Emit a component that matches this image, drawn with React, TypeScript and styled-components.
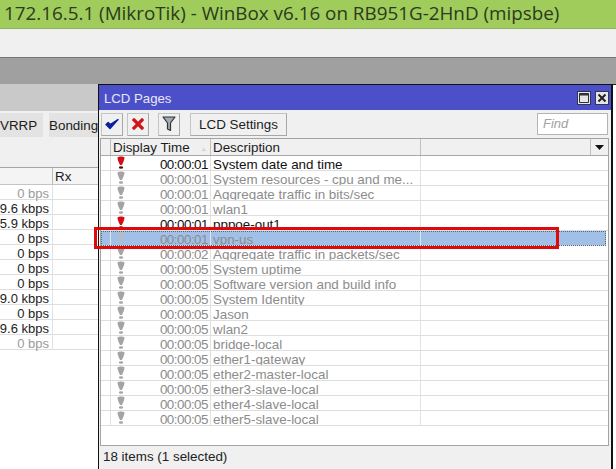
import React from "react";
import styled, { createGlobalStyle } from "styled-components";

const Global = createGlobalStyle`
  html, body { margin: 0; padding: 0; background: #a0a0a0; }
  body { width: 616px; height: 469px; overflow: hidden; font-family: "Liberation Sans", Arial, sans-serif; }
  #root { height: 469px; }
`;

const Page = styled.div`
  width: 616px; height: 469px; display: flex; flex-direction: column; overflow: hidden; position: relative;
`;
const TitleBar = styled.div`
  height: 28px; flex: none; background: #a0cc5c; border-bottom: 1px solid #8fae66; color: #2b3a20;
  font: 18.83px/27px "Open Sans", "Noto Sans", sans-serif; padding-left: 4px; white-space: nowrap;
`;
const MenuBar = styled.div`
  height: 28px; flex: none; background: #f0f0f0; border-bottom: 1px solid #757575;
`;
const Desktop = styled.div`
  flex: 1; min-height: 0; display: flex; align-items: stretch; padding-top: 26px; background: #a0a0a0; position: relative;
`;
const BackWindow = styled.div`
  width: 98px; flex: none; background: #fff; display: flex; flex-direction: column; overflow: hidden;
`;
const BackTitle = styled.div` height: 27px; flex: none; background: #c9c9c9; `;
const BackTabs = styled.div`
  height: 56px; flex: none; background: #f0f0f0; display: flex; align-items: flex-start; gap: 6px; padding-top: 2px; box-sizing: border-box;
`;
const BackTab = styled.div<{ $w: number }>`
  width: ${p => p.$w}px; height: 24px; flex: none; background: #e3e3e3; font-size: 13.4px; line-height: 25px; color: #1c1c1c; box-sizing: border-box; white-space: nowrap;
`;
const BackHead = styled.div`
  height: 18px; flex: none; display: grid; grid-template-columns: 52px 1fr; background: #f4f4f4; border-top: 1px solid #a6a6a6; border-bottom: 1px solid #c4c4c4; box-sizing: border-box; font-size: 13.4px; line-height: 17px; color: #1c1c1c;
`;
const BackHeadCell = styled.div`
  padding-left: 2px; border-left: 1px solid #bdbdbd;
  &:first-child { border-left: 0; }
`;
const BackRow = styled.div`
  height: 15px; flex: none; border-bottom: 1px solid #dedede; box-sizing: border-box;
`;
const BackRate = styled.div<{ $dim?: boolean }>`
  width: 53px; height: 14px; box-sizing: border-box; display: flex; justify-content: flex-end; white-space: nowrap; font-size: 13px; line-height: 17px; color: ${p => (p.$dim ? "#9a9a9a" : "#222")}; border-right: 1px solid #e2e2e2; padding-right: 3px;
`;
const Window = styled.div`
  width: 515px; flex: none; background: #f0f0f0; border: 1px solid #111; border-bottom: 0; border-right-width: 2px; box-sizing: border-box; display: flex; flex-direction: column;
`;
const WindowTitle = styled.div`
  height: 25px; flex: none; background: #4c50c8; color: #e8e8f8; font-size: 13.2px; padding: 0 2px 0 5px; display: flex; align-items: center; justify-content: space-between;
`;
const WindowName = styled.span` position: relative; top: 1px; `;
const Controls = styled.div` display: flex; gap: 4px; margin-top: 1px; `;
const Control = styled.div`
  width: 14px; height: 14px; background: #e6e6e6; border: 1px solid #33335a; box-sizing: border-box; display: flex; align-items: center; justify-content: center;
`;
const Toolbar = styled.div`
  height: 28px; flex: none; display: flex; align-items: center; padding: 0 3px 0 2px; box-sizing: border-box;
`;
const ToolButton = styled.div<{ $after?: number }>`
  width: 22px; height: 23px; flex: none; box-sizing: border-box; background: #f0f0f0; border: 1px solid #c4c4c4; border-right-color: #a8a8a8; border-bottom-color: #a8a8a8; display: flex; align-items: center; justify-content: center; margin-right: ${p => p.$after ?? 4}px;
`;
const TextButton = styled(ToolButton)`
  width: 97px; font-size: 13.4px; color: #1e1e1e;
`;
const Find = styled.div`
  margin-left: auto; width: 71px; height: 22px; background: #fff; border: 1px solid #b4b4b4; box-sizing: border-box; color: #a2a2a2; font-size: 13px; font-style: italic; line-height: 19px; padding-left: 5px;
`;
const Table = styled.div`
  flex: none; height: 308px; margin: 0 2px 0 1px; background: #fff; border: 1px solid #a4a4a4; box-sizing: border-box; overflow: hidden;
`;
const Columns = "10px 100px 210px 1fr";
const Head = styled.div`
  height: 17px; display: grid; grid-template-columns: ${Columns}; background: #f0f0f0; border-bottom: 1px solid #a8a8a8; box-sizing: border-box; font-size: 13.4px; line-height: 18px; color: #1c1c1c;
`;
const HeadCell = styled.div`
  border-right: 1px solid #c0c0c0; padding-left: 2px; display: flex; justify-content: space-between; overflow: hidden;
  &:last-child { border-right: 0; padding: 0; justify-content: flex-end; }
`;
const Sort = styled.span` color: #bbb; font-size: 7px; margin-right: 4px; margin-top: 1px; `;
const Menu = styled.div`
  width: 17px; height: 100%; border-left: 1px solid #c0c0c0; display: flex; align-items: center; justify-content: center;
`;
const Row = styled.div<{ $selected?: boolean }>`
  height: 15px; display: grid; grid-template-columns: ${Columns}; box-sizing: border-box; border-bottom: 1px solid #dedede;
  background: ${p => (p.$selected ? "#a0c0e8" : "#fff")};
  ${p => p.$selected && "outline: 1px dotted #55657a; outline-offset: -1px; margin-right: 2px;"}
`;
const Cell = styled.div<{ $on?: boolean }>`
  border-right: 1px solid #e2e2e2; overflow: hidden; white-space: nowrap; box-sizing: border-box; height: 14px;
  font-size: 13.4px; line-height: 18px; padding: 0 2px; color: ${p => (p.$on ? "#111" : "#8c8c8c")};
  &:last-child { border-right: 0; }
`;
const TimeCell = styled(Cell)`
  display: flex; justify-content: space-between; padding: 0 2px 0 6px; letter-spacing: -0.5px;
`;
const Status = styled.div`
  flex: 1; background: #f0f0f0; font-size: 13.4px; line-height: 21px; padding: 0 0 0 4px; color: #222;
`;
const Highlight = styled.div`
  position: absolute; left: 94px; top: 169px; width: 465px; height: 22px; border: 3px solid #dc0a0a; box-sizing: border-box; pointer-events: none;
`;
const Sliver = styled.div`
  flex: 1; background: #fff; border-top: 1px solid #222;
`;

const Mark = ({ on, sel }: { on?: boolean; sel?: boolean }) => {
  const fill = on ? "#d40d14" : sel ? "#b4bcc6" : "#a4a4a4";
  return (
    <svg width="8" height="14" viewBox="0 0 8 14" style={{ flex: "none" }}>
      <path d="M0.6 1.2C2 0.2 6 0.2 7.4 1.2C7.8 3.6 5.6 7.4 5 9H3C2.4 7.4 0.2 3.6 0.6 1.2Z" fill={fill} />
      <ellipse cx="4" cy="11.5" rx="2.2" ry="1.3" fill={on ? "#5a1010" : fill} />
    </svg>
  );
};

const Check = () => (
  <svg width="14" height="12" viewBox="0 0 14 12">
    <path d="M1 6.5L5 10.5L13 1.5L5.2 6.5L3.2 4.6Z" fill="#10209c" stroke="#10209c" strokeWidth="1.4" strokeLinejoin="round" />
  </svg>
);
const Cross = () => (
  <svg width="12" height="12" viewBox="0 0 12 12">
    <path d="M2 2L10 10M10 2L2 10" stroke="#d21418" strokeWidth="3.2" strokeLinecap="square" />
  </svg>
);
const Funnel = () => (
  <svg width="14" height="16" viewBox="0 0 14 16">
    <path d="M1 1H13L8.5 7V14.5L5.5 13V7Z" fill="#a3abb4" stroke="#333" strokeWidth="1.2" strokeLinejoin="round" />
  </svg>
);
const Maximize = () => (
  <svg width="10" height="10" viewBox="0 0 10 10">
    <path d="M0.5 0.5H9.5V9.5H0.5Z" fill="none" stroke="#333" />
    <path d="M0 1.5H10" stroke="#333" strokeWidth="2" />
  </svg>
);
const Close = () => (
  <svg width="10" height="10" viewBox="0 0 10 10">
    <path d="M1.5 1.5L8.5 8.5M8.5 1.5L1.5 8.5" stroke="#222" strokeWidth="2" />
  </svg>
);
const Caret = () => (
  <svg width="9" height="5" viewBox="0 0 9 5"><path d="M0 0H9L4.5 5Z" fill="#111" /></svg>
);

const rates: [string, boolean?][] = [
  ["0 bps", true], ["9.6 kbps"], ["5.9 kbps"], ["0 bps"], ["0 bps"], ["0 bps"], ["0 bps"],
  ["9.0 kbps"], ["0 bps"], ["9.6 kbps"], ["0 bps", true],
];

const pages: { time: string; text: string; on?: boolean; red?: boolean; sel?: boolean }[] = [
  { time: "00:00:01", text: "System date and time", on: true, red: true },
  { time: "00:00:01", text: "System resources - cpu and me..." },
  { time: "00:00:01", text: "Aggregate traffic in bits/sec" },
  { time: "00:00:01", text: "wlan1" },
  { time: "00:00:01", text: "pppoe-out1", on: true, red: true },
  { time: "00:00:01", text: "vpn-us", sel: true },
  { time: "00:00:02", text: "Aggregate traffic in packets/sec" },
  { time: "00:00:05", text: "System uptime" },
  { time: "00:00:05", text: "Software version and build info" },
  { time: "00:00:05", text: "System Identity" },
  { time: "00:00:05", text: "Jason" },
  { time: "00:00:05", text: "wlan2" },
  { time: "00:00:05", text: "bridge-local" },
  { time: "00:00:05", text: "ether1-gateway" },
  { time: "00:00:05", text: "ether2-master-local" },
  { time: "00:00:05", text: "ether3-slave-local" },
  { time: "00:00:05", text: "ether4-slave-local" },
  { time: "00:00:05", text: "ether5-slave-local" },
];

export default function App() {
  return (
    <Page>
      <Global />
      <TitleBar>172.16.5.1 (MikroTik) - WinBox v6.16 on RB951G-2HnD (mipsbe)</TitleBar>
      <MenuBar />
      <Desktop>
        <BackWindow>
          <BackTitle />
          <BackTabs>
            <BackTab $w={43}>VRRP</BackTab>
            <BackTab $w={60}>Bonding</BackTab>
          </BackTabs>
          <BackHead>
            <BackHeadCell />
            <BackHeadCell>Rx</BackHeadCell>
          </BackHead>
          {rates.map(([v, dim], i) => (
            <BackRow key={i}>
              <BackRate $dim={dim}>{v}</BackRate>
            </BackRow>
          ))}
        </BackWindow>
        <Window>
          <WindowTitle>
            <WindowName>LCD Pages</WindowName>
            <Controls>
              <Control><Maximize /></Control>
              <Control><Close /></Control>
            </Controls>
          </WindowTitle>
          <Toolbar>
            <ToolButton><Check /></ToolButton>
            <ToolButton $after={9}><Cross /></ToolButton>
            <ToolButton $after={10}><Funnel /></ToolButton>
            <TextButton>LCD Settings</TextButton>
            <Find>Find</Find>
          </Toolbar>
          <Table>
            <Head>
              <HeadCell />
              <HeadCell>Display Time<Sort>▵</Sort></HeadCell>
              <HeadCell>Description</HeadCell>
              <HeadCell><Menu><Caret /></Menu></HeadCell>
            </Head>
            {pages.map((p, i) => (
              <Row key={i} $selected={p.sel}>
                <Cell />
                <TimeCell $on={p.on}>
                  <Mark on={p.red} sel={p.sel} />
                  {p.time}
                </TimeCell>
                <Cell $on={p.on}>{p.text}</Cell>
                <Cell />
              </Row>
            ))}
          </Table>
          <Status>18 items (1 selected)</Status>
        </Window>
        <Sliver />
        <Highlight />
      </Desktop>
    </Page>
  );
}
